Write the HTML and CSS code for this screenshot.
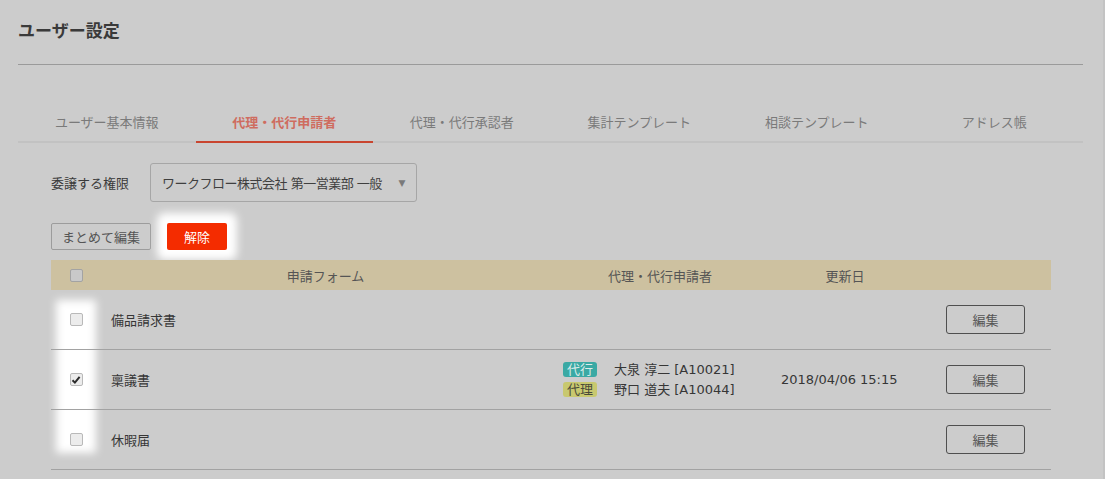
FILE: index.html
```html
<!DOCTYPE html>
<html lang="ja">
<head>
    <meta charset="UTF-8" />
    <title>ユーザー設定</title>
    <meta name="viewport" content="width=device-width, initial-scale=1.0" />
    <link rel="stylesheet" href="styles.css">
</head>
<body>

<div class="page">
    <h1 class="title">ユーザー設定</h1>

    <nav class="tabs">
        <a class="tab">ユーザー基本情報</a>
        <a class="tab active">代理・代行申請者</a>
        <a class="tab">代理・代行承認者</a>
        <a class="tab">集計テンプレート</a>
        <a class="tab">相談テンプレート</a>
        <a class="tab">アドレス帳</a>
    </nav>

    <div class="content">
        <div class="field">
            <span class="field-label">委譲する権限</span>
            <div class="select">ワークフロー株式会社 第一営業部 一般<span class="caret">▼</span></div>
        </div>

        <div class="actions">
            <button class="btn">まとめて編集</button>
            <button class="btn btn-danger spot">解除</button>
        </div>

        <div class="table">
            <div class="grid thead">
                <div class="cell center"><span class="check"></span></div>
                <div class="cell center">申請フォーム</div>
                <div class="cell center">代理・代行申請者</div>
                <div class="cell center">更新日</div>
                <div class="cell"></div>
            </div>

            <div class="tbody">
                <div class="grid trow">
                    <div class="cell center"><span class="check"></span></div>
                    <div class="cell name">備品請求書</div>
                    <div class="cell"></div>
                    <div class="cell"></div>
                    <div class="cell center"><button class="btn-edit">編集</button></div>
                </div>
                <div class="grid trow">
                    <div class="cell center">
                        <span class="check checked">
                            <svg width="10" height="10" viewBox="0 0 10 10"><path d="M1.5 5.2 L3.9 7.6 L8.6 1.8" fill="none" stroke="#2b2b2b" stroke-width="2"/></svg>
                        </span>
                    </div>
                    <div class="cell name">稟議書</div>
                    <div class="cell">
                        <div class="agents">
                            <div class="agent"><span class="badge badge-teal">代行</span>大泉 淳二 [A10021]</div>
                            <div class="agent"><span class="badge badge-olive">代理</span>野口 道夫 [A10044]</div>
                        </div>
                    </div>
                    <div class="cell date">2018/04/06 15:15</div>
                    <div class="cell center"><button class="btn-edit">編集</button></div>
                </div>
                <div class="grid trow">
                    <div class="cell center"><span class="check"></span></div>
                    <div class="cell name">休暇届</div>
                    <div class="cell"></div>
                    <div class="cell"></div>
                    <div class="cell center"><button class="btn-edit">編集</button></div>
                </div>
            </div>
        </div>
    </div>
</div>

</body>
</html>
```

FILE: styles.css
```css
* {
  box-sizing: border-box;
}
body {
  margin: 0;
  min-height: 100vh;
  background-color: #cccccc;
  border-right: 2px solid #c3c3c3;
  font-family: "DejaVu Sans", "Noto Sans CJK JP", sans-serif;
  font-size: 13px;
  color: #383838;
}
.page {
  padding: 19px 20px 0 18px;
}
.title {
  margin: 0;
  padding-bottom: 21px;
  border-bottom: 1px solid #9a9a9a;
  font-size: 17px;
  line-height: 24px;
  font-weight: bold;
  color: #3a3a3a;
}
.tabs {
  display: flex;
  margin-top: 48px;
  border-bottom: 2px solid #c2c2c2;
}
.tab {
  flex: 1;
  text-align: center;
  font-size: 13px;
  line-height: 20px;
  padding-bottom: 8px;
  margin-bottom: -2px;
  border-bottom: 2px solid transparent;
  color: #7a7a7a;
}
.tab.active {
  color: #cf6c5f;
  font-weight: bold;
  border-bottom-color: #c9452f;
}
.content {
  padding: 20px 32px 0 33px;
}
.field {
  display: flex;
  align-items: center;
  gap: 21px;
}
.field-label {
  color: #3a3a3a;
}
.select {
  display: flex;
  align-items: center;
  width: 267px;
  height: 39px;
  padding: 0 11px;
  border: 1px solid #a6a6a6;
  border-radius: 3px;
  color: #3f3f3f;
  white-space: nowrap;
  letter-spacing: -0.5px;
}
.caret {
  margin-left: auto;
  font-size: 9px;
  color: #7a7a7a;
}
.actions {
  display: flex;
  gap: 16px;
  margin-top: 21px;
  margin-bottom: 10px;
}
.btn {
  height: 27px;
  padding: 0;
  border: 1px solid #9c9c9c;
  border-radius: 2px;
  background: transparent;
  font-family: inherit;
  font-size: 13px;
  color: #555;
  width: 100px;
}
.btn-danger {
  width: 60px;
  border: none;
  background-color: #f42c00;
  color: #fff;
}
.spot {
  box-shadow: 0 0 8px 10px #fff;
}
.grid {
  display: grid;
  grid-template-columns: 50px 449px 220px 150px 131px;
}
.cell {
  display: flex;
  align-items: center;
}
.center {
  justify-content: center;
}
.thead {
  height: 30px;
  background-color: #cdc1a0;
  color: #555;
  position: relative;
}
.tbody {
  position: relative;
}
.tbody::before {
  content: '';
  position: absolute;
  left: 5px;
  top: 10px;
  width: 40px;
  bottom: 17px;
  background: #fff;
  filter: blur(4px);
}
.trow {
  position: relative;
  height: 60px;
  border-bottom: 1px solid #a2a2a2;
}
.name {
  padding-left: 10px;
  color: #363636;
}
.check {
  display: flex;
  align-items: center;
  justify-content: center;
  width: 13px;
  height: 13px;
  border: 1px solid #a3a3a3;
  border-radius: 2px;
  background: #c9c9c9;
}
.tbody .check {
  border-color: #b9b9b9;
  background: #ececec;
}
.agents {
  padding-left: 13px;
  color: #363636;
}
.agent {
  display: flex;
  align-items: center;
  line-height: 20px;
}
.badge {
  display: inline-block;
  width: 34px;
  height: 15px;
  line-height: 15px;
  margin-right: 17px;
  border-radius: 3px;
  text-align: center;
  font-size: 13px;
}
.badge-teal {
  background-color: #3aa9a4;
  color: #dcecea;
}
.badge-olive {
  background-color: #c8c86f;
  color: #4a4a3a;
}
.date {
  padding-left: 11px;
  color: #363636;
}
.btn-edit {
  width: 79px;
  height: 29px;
  padding: 0;
  border: 1px solid #4f4f4f;
  border-radius: 3px;
  background: transparent;
  font-family: inherit;
  font-size: 13px;
  color: #555;
}
```
